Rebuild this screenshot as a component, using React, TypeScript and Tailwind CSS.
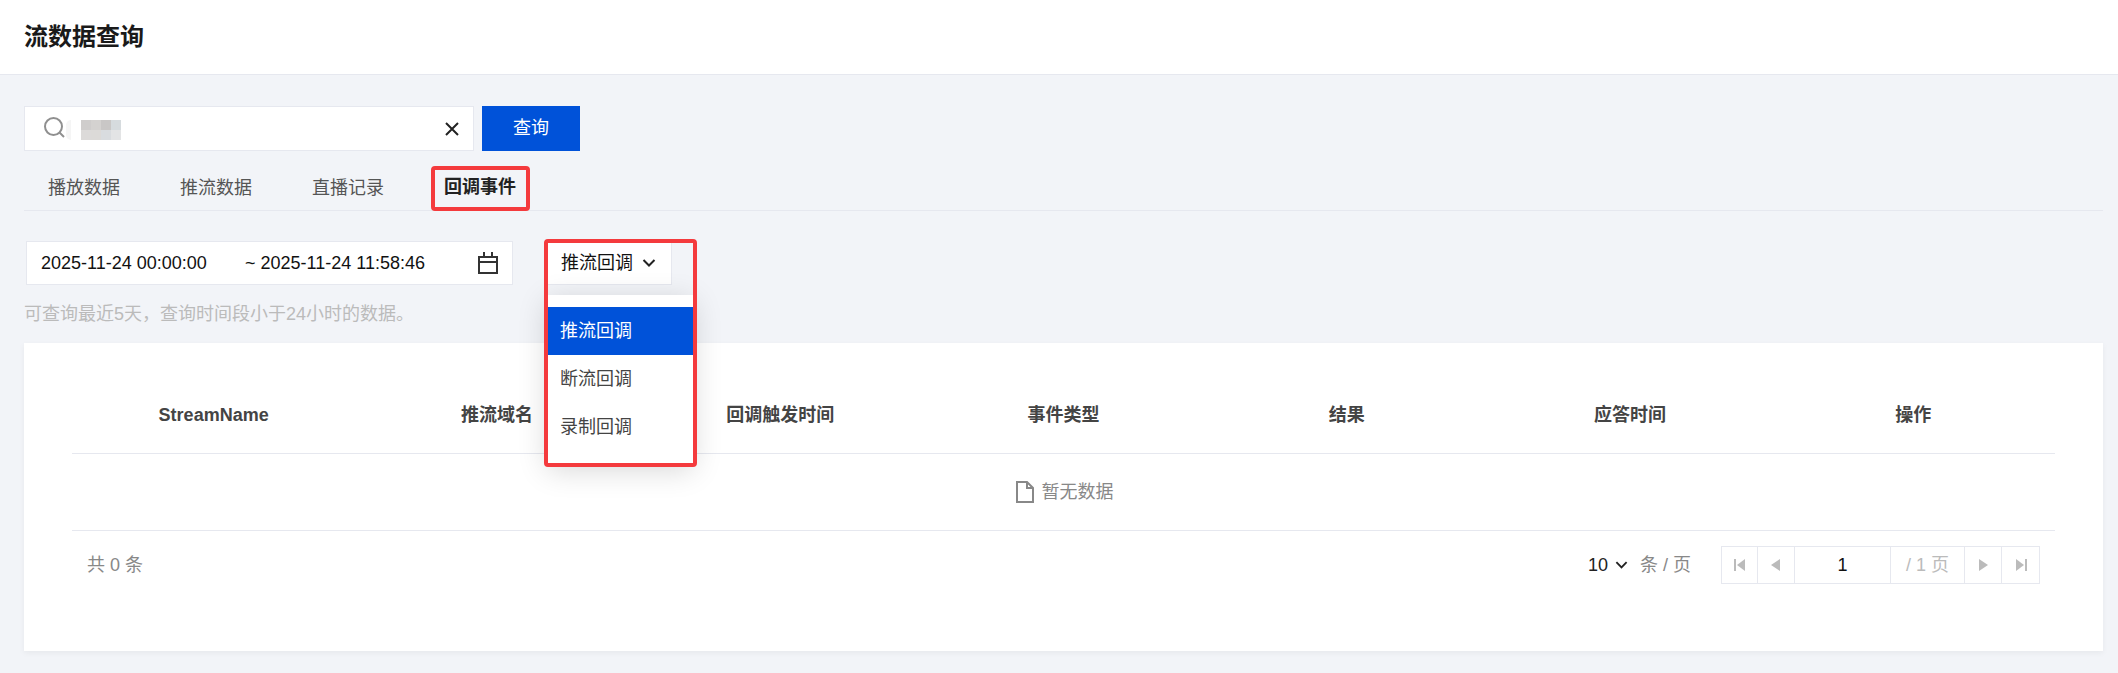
const FONT = "font-['Liberation_Sans','Noto_Sans_CJK_SC',sans-serif]";

const tabs = ["播放数据", "推流数据", "直播记录", "回调事件"];
const cols = ["StreamName", "推流域名", "回调触发时间", "事件类型", "结果", "应答时间", "操作"];

function Chevron({ className }: { className?: string }) {
  return (
    <svg viewBox="0 0 14 10" className={className} fill="none" stroke="#222" strokeWidth="2">
      <path d="M1.5 2 L7 7.5 L12.5 2" />
    </svg>
  );
}

function PagerBtn({ d, bar, w, last }: { d: string; bar?: number; w: string; last?: boolean }) {
  return (
    <div className={`${w} h-full flex items-center justify-center ${last ? "" : "border-r border-[#e6e8ef]"}`}>
      <svg width="14" height="14" viewBox="0 0 14 14" fill="#bbbbbb">
        <path d={d} />
        {bar !== undefined && <rect x={bar} y="1" width="2" height="12" />}
      </svg>
    </div>
  );
}

export default function App() {
  return (
    <div className={`${FONT} w-[2118px] h-[673px] bg-[#f2f4f8] overflow-hidden text-[18px]`}>
      <header className="h-[75px] bg-white border-b border-[#e6e8ef] pl-6 flex items-center">
        <h1 className="text-[24px] leading-none font-bold text-[#1a1a1a]">流数据查询</h1>
      </header>

      <main className="pl-6 pr-[15px] pt-[31px]">
        <div className="flex gap-[8px]">
          <div className="w-[450px] h-[45px] bg-white border border-[#e6e8ef] flex items-center pl-[19px] pr-[13px]">
            <svg width="21" height="21" viewBox="0 0 21 21" fill="none" stroke="#8f8f8f" strokeWidth="2" className="mb-[3px]">
              <circle cx="9.5" cy="9.5" r="8.5" />
              <path d="M15.5 15.5 L20 20" />
            </svg>
            <div className="ml-[1px] w-[5px] h-[20px] bg-[#f5f5f5] rounded-l-[5px] mt-[2px]" />
            <div className="ml-[10px] mt-[2px] w-[40px] h-[20px] grid grid-cols-4 grid-rows-2">
              <div className="bg-[#cfcdcc]" />
              <div className="bg-[#d4d2d0]" />
              <div className="bg-[#c9c7c6]" />
              <div className="bg-[#d6dbde]" />
              <div className="bg-[#dcdad9]" />
              <div className="bg-[#dcdad8]" />
              <div className="bg-[#d9dcdf]" />
              <div className="bg-[#e3e4e5]" />
            </div>
            <div className="flex-1" />
            <svg width="16" height="16" viewBox="0 0 16 16" stroke="#222" strokeWidth="2" fill="none">
              <path d="M2 2 L14 14 M14 2 L2 14" />
            </svg>
          </div>
          <button className="w-[98px] h-[45px] bg-[#0052d9] text-white text-[18px]">查询</button>
        </div>

        <div className="mt-[14px] h-[46px] border-b border-[#e6e8ef] flex pl-6 gap-[60px]">
          {tabs.map((t, i) => (
            <div
              key={t}
              className={`relative h-[46px] flex items-center ${i === 3 ? "font-bold text-[#222] border-b-2 border-[#0052d9]" : "text-[#555]"}`}
            >
              {t}
              {i === 3 && <div className="absolute left-[-13px] right-[-14px] top-[1px] h-[45px] border-[4px] border-[#f43a3d] rounded-[4px]" />}
            </div>
          ))}
        </div>

        <div className="mt-[30px] flex ml-[2px] items-start">
          <div className="w-[487px] h-[44px] bg-white border border-[#e6e8ef] flex items-center pl-[14px] pr-[14px] text-[#111]">
            <span className="w-[204px]">2025-11-24 00:00:00</span>
            <span className="flex-1 whitespace-pre">~ 2025-11-24 11:58:46</span>
            <svg width="20" height="22" viewBox="0 0 20 22" fill="none" stroke="#333" strokeWidth="2">
              <path d="M1 5 H19 V21 H1 Z M1 10 H19 M6 0 V5 M14 0 V5" />
            </svg>
          </div>

          <div className="relative ml-[34px] w-[125px] h-[44px] bg-white border border-[#e6e8ef] flex items-center pl-[13px] text-[#111]">
            推流回调
            <Chevron className="ml-[9px] w-[14px] h-[10px]" />
            <div className="absolute left-[-1px] top-[53px] w-[146px] h-[169px] bg-white shadow-[0_6px_28px_rgba(0,0,0,0.16)] pt-[12px] text-[#444] z-10">
              <div className="h-[48px] bg-[#0052d9] text-white flex items-center pl-[13px]">推流回调</div>
              <div className="h-[48px] flex items-center pl-[13px]">断流回调</div>
              <div className="h-[48px] flex items-center pl-[13px]">录制回调</div>
            </div>
            <div className="absolute left-[-4px] top-[-3px] w-[153px] h-[228px] border-[4px] border-[#f43a3d] rounded-[4px] z-20" />
          </div>
        </div>

        <p className="mt-[16px] h-[26px] leading-[26px] text-[#bbbbbb]">可查询最近5天，查询时间段小于24小时的数据。</p>

        <section className="mt-[16px] h-[308px] bg-white shadow-[0_2px_6px_rgba(0,0,0,0.05)] px-12 pt-[37px]">
          <div className="grid grid-cols-7 h-[74px] border-b border-[#e6e8ef] pb-[3px]">
            {cols.map((c) => (
              <div key={c} className="flex items-center justify-center font-bold text-[#444]">{c}</div>
            ))}
          </div>
          <div className="h-[77px] border-b border-[#e6e8ef] flex items-center justify-center text-[#888] pl-[2px]">
            <svg width="18" height="22" viewBox="0 0 18 22" fill="none" stroke="#888" strokeWidth="2" className="mr-[8px]">
              <path d="M1 1 H11 L17 7 V21 H1 Z M11 1 V7 H17" />
            </svg>
            暂无数据
          </div>
          <div className="mt-[15px] flex items-center pl-[15px] pr-[15px]">
            <span className="text-[#888] whitespace-pre">共 0 条</span>
            <div className="flex-1" />
            <span className="text-[#222] mr-[-1px]">10</span>
            <Chevron className="ml-[8px] w-[13px] h-[10px]" />
            <span className="ml-[12px] text-[#888] whitespace-pre">条 / 页</span>
            <div className="ml-[30px] h-[38px] w-[319px] border border-[#e6e8ef] flex items-center">
              <PagerBtn w="w-[36px]" d="M12 1 V13 L4 7 Z" bar={1} />
              <PagerBtn w="w-[37px]" d="M11 1 V13 L2 7 Z" />
              <div className="w-[96px] h-full border-r border-[#e6e8ef] flex items-center justify-center text-[#111]">1</div>
              <div className="w-[74px] h-full border-r border-[#e6e8ef] flex items-center justify-center text-[#bbbbbb] whitespace-pre">/ 1 页</div>
              <PagerBtn w="w-[37px]" d="M3 1 V13 L12 7 Z" />
              <PagerBtn w="flex-1" d="M2 1 V13 L10 7 Z" bar={11} last />
            </div>
          </div>
        </section>
      </main>
    </div>
  );
}
